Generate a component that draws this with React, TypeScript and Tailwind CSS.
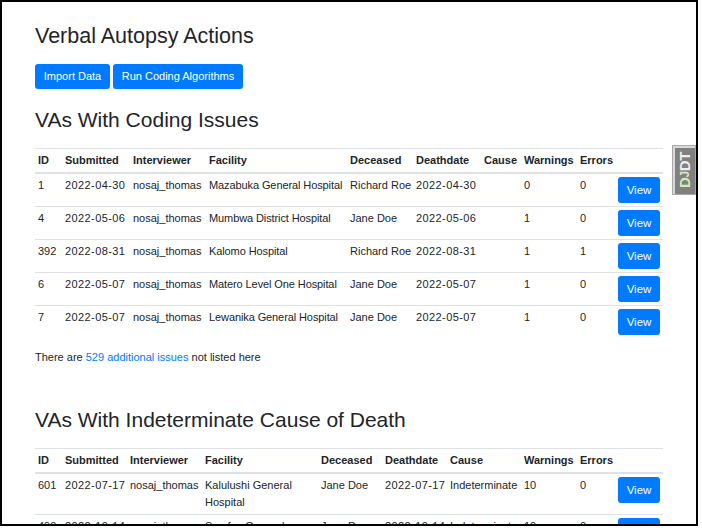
const issues = [
  { id: "1", submitted: "2022-04-30", interviewer: "nosaj_thomas", facility: "Mazabuka General Hospital", deceased: "Richard Roe", deathdate: "2022-04-30", cause: "", warnings: "0", errors: "0" },
  { id: "4", submitted: "2022-05-06", interviewer: "nosaj_thomas", facility: "Mumbwa District Hospital", deceased: "Jane Doe", deathdate: "2022-05-06", cause: "", warnings: "1", errors: "0" },
  { id: "392", submitted: "2022-08-31", interviewer: "nosaj_thomas", facility: "Kalomo Hospital", deceased: "Richard Roe", deathdate: "2022-08-31", cause: "", warnings: "1", errors: "1" },
  { id: "6", submitted: "2022-05-07", interviewer: "nosaj_thomas", facility: "Matero Level One Hospital", deceased: "Jane Doe", deathdate: "2022-05-07", cause: "", warnings: "1", errors: "0" },
  { id: "7", submitted: "2022-05-07", interviewer: "nosaj_thomas", facility: "Lewanika General Hospital", deceased: "Jane Doe", deathdate: "2022-05-07", cause: "", warnings: "1", errors: "0" },
];

const indeterminate = [
  { id: "601", submitted: "2022-07-17", interviewer: "nosaj_thomas", facility: "Kalulushi General Hospital", deceased: "Jane Doe", deathdate: "2022-07-17", cause: "Indeterminate", warnings: "10", errors: "0" },
  { id: "490", submitted: "2022-10-14", interviewer: "nosaj_thomas", facility: "Samfya General Hospital", deceased: "Jane Doe", deathdate: "2022-10-14", cause: "Indeterminate", warnings: "10", errors: "0" },
];

const headers = ["ID", "Submitted", "Interviewer", "Facility", "Deceased", "Deathdate", "Cause", "Warnings", "Errors", ""];

type Row = (typeof issues)[number];

function VaTable({ rows, cols, wrapFacility }: { rows: Row[]; cols: number[]; wrapFacility?: boolean }) {
  const cell = "align-top px-[3px] py-[3px] border-t border-[#dee2e6] whitespace-nowrap";
  return (
    <table className="w-[628px] table-fixed border-collapse text-[11px] leading-[17px] text-[#212529]">
      <colgroup>
        {cols.map((w, i) => (
          <col key={i} style={{ width: w }} />
        ))}
      </colgroup>
      <thead>
        <tr>
          {headers.map((h, i) => (
            <th
              key={i}
              className="text-left font-bold whitespace-nowrap align-bottom px-[3px] py-[3px] border-t border-b-2 border-[#dee2e6]"
            >
              {h}
            </th>
          ))}
        </tr>
      </thead>
      <tbody>
        {rows.map((r) => (
          <tr key={r.id}>
            <td className={cell}>{r.id}</td>
            <td className={`${cell} tracking-[0.4px]`}>{r.submitted}</td>
            <td className={cell}>{r.interviewer}</td>
            <td
              className={
                wrapFacility
                  ? "align-top px-[3px] py-[3px] border-t border-[#dee2e6]"
                  : "align-top px-[3px] py-[3px] border-t border-[#dee2e6] whitespace-nowrap tracking-[-0.1px]"
              }
            >
              {r.facility}
            </td>
            <td className={cell}>{r.deceased}</td>
            <td className={`${cell} tracking-[0.4px]`}>{r.deathdate}</td>
            <td className={cell}>{r.cause}</td>
            <td className={cell}>{r.warnings}</td>
            <td className={cell}>{r.errors}</td>
            <td className="align-top px-[3px] py-[3px] border-t border-[#dee2e6]">
              <button className="h-[26px] w-[42px] rounded-[3px] bg-[#007bff] text-white text-[11.5px]">
                View
              </button>
            </td>
          </tr>
        ))}
      </tbody>
    </table>
  );
}

export default function App() {
  return (
    <div className="relative w-[698px] h-[526px] border-2 border-black overflow-hidden bg-white font-['Liberation_Sans',Arial,sans-serif] text-[#212529]">
      <div className="pl-[33px] pt-[22px]">
        <h3 className="text-[21.5px] leading-[24px]">Verbal Autopsy Actions</h3>

        <div className="flex gap-[3px] mt-[16px]">
          <button className="h-[25px] w-[75px] rounded-[3px] bg-[#007bff] text-white text-[11px]">Import Data</button>
          <button className="h-[25px] w-[130px] rounded-[3px] bg-[#007bff] text-white text-[11px]">Run Coding Algorithms</button>
        </div>

        <h2 className="mt-[19px] text-[21px] leading-[24px]">VAs With Coding Issues</h2>

        <div className="mt-[16px]">
          <VaTable rows={issues} cols={[27, 68, 76, 141, 66, 68, 40, 56, 38, 48]} />
        </div>

        <p className="mt-[11px] text-[11px] leading-[17px]">
          There are <a href="#" className="text-[#007bff]">529 additional issues</a> not listed here
        </p>

        <h2 className="mt-[42px] text-[21px] leading-[24px]">VAs With Indeterminate Cause of Death</h2>

        <div className="mt-[16px]">
          <VaTable rows={indeterminate} cols={[27, 65, 75, 116, 64, 65, 74, 56, 38, 48]} wrapFacility />
        </div>
      </div>

      {/* debug toolbar handle */}
      <div className="absolute right-0 top-[143px] w-[24px] h-[50px] border border-[#a8a8a8] bg-[#808080] flex items-center justify-center">
        <div className="absolute inset-0 border-l-2 border-t-2 border-white/70" />
        <span className="relative [writing-mode:vertical-rl] rotate-180 font-bold text-[15px] leading-none tracking-tight">
          <span className="text-[#d3ebb8]">D</span>
          <span className="text-[#d3ebb8] text-[12px]">J</span>
          <span className="text-[#eeeeee]">DT</span>
        </span>
      </div>
    </div>
  );
}
